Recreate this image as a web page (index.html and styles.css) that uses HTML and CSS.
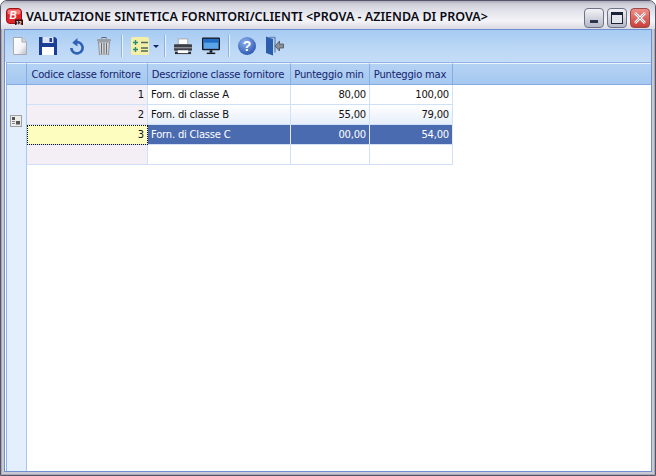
FILE: index.html
```html
<!DOCTYPE html>
<html lang="it">
<head>
<meta charset="utf-8">
<title>Valutazione sintetica</title>
<link rel="stylesheet" href="styles.css">
</head>
<body>
<div class="window">
  <div class="titlebar">
    <svg class="appicon" width="17" height="17" viewBox="0 0 17 17">
      <rect x="0.500" y="0.500" width="15" height="15" rx="3.500" fill="#e0242a" stroke="#a01018"/>
      <rect x="1.500" y="1.500" width="13" height="5" rx="2" fill="#f27a78"/>
      <text class="icon-b" x="3.500" y="10.500">B</text>
      <rect x="9" y="11.500" width="8" height="5.500" fill="#3a0a0a"/>
      <text class="icon-12" x="10" y="16.500">12</text>
    </svg>
    <span class="title">VALUTAZIONE SINTETICA FORNITORI/CLIENTI &lt;PROVA - AZIENDA DI PROVA&gt;</span>
    <div class="winbtns">
      <div class="wb wb-min"><span class="wb-minbar"></span></div>
      <div class="wb wb-max"><span class="wb-maxbox"></span></div>
      <div class="wb wb-close">
        <svg width="14" height="14" viewBox="0 0 14 14"><path d="M2 2l10 10M12 2L2 12" stroke="#fff" stroke-width="2.600"/><path d="M2 2l10 10M12 2L2 12" stroke="#5a1010" stroke-width="0.400"/></svg>
      </div>
    </div>
  </div>
  <div class="body">
    <div class="toolbar">
      <svg class="ti" width="14" height="18" viewBox="0 0 14 18"><defs><linearGradient id="pg" x1="0" y1="0" x2="1" y2="1"><stop offset="0" stop-color="#fff"/><stop offset="0.600" stop-color="#f4f4f8"/><stop offset="1" stop-color="#b9bcc4"/></linearGradient></defs><path d="M0.500 0.500h8.500l4.500 4.500v12.500H0.500z" fill="url(#pg)" stroke="#a8aab4"/><path d="M9 0.500v4.500h4.500" fill="#d8d8de" stroke="#a4a6b0"/></svg>
      <svg class="ti ti-save" width="18" height="18" viewBox="0 0 18 18"><path d="M0 0h16l2 2v16H0z" fill="#1b3f94"/><rect x="3.500" y="0" width="11" height="6" fill="#dce4f5"/><rect x="10.500" y="1" width="2.500" height="4" fill="#1b3f94"/><rect x="3" y="10" width="12" height="8" fill="#fff"/></svg>
      <svg class="ti ti-undo" width="15" height="17" viewBox="0 0 16 18"><path d="M5 5.500a6 6 0 1 1-2.500 5" fill="none" stroke="#2f62b4" stroke-width="2.800"/><path d="M9 0v9L3.500 5z" fill="#2f62b4"/></svg>
      <svg class="ti ti-trash" width="14" height="18" viewBox="0 0 14 18"><rect x="5" y="0.500" width="4" height="2" fill="none" stroke="#666"/><rect x="0" y="2" width="14" height="2.500" rx="1" fill="#9a9ea4"/><path d="M1.500 5h11l-1 13h-9z" fill="#d2d4d8" stroke="#777" stroke-width="0.700"/><path d="M4.500 6v11M7 6v11M9.500 6v11" stroke="#6e7076"/></svg>
      <span class="sep sep-a"></span>
      <span class="calc">
        <svg width="18" height="16" viewBox="0 0 18 16"><path d="M2 4.500h5M4.500 2v5M2 11.500h5M4.500 9v5" stroke="#2a8a78" stroke-width="1.400"/><path d="M10 4.500h7M10 10h7M10 13h7" stroke="#4f6a5a" stroke-width="1.400"/></svg>
      </span>
      <span class="caret"></span>
      <span class="sep sep-b"></span>
      <svg class="ti ti-print" width="18" height="17" viewBox="0 0 19 17"><rect x="4.500" y="0.500" width="10" height="6" fill="#fff" stroke="#aaa"/><rect x="0" y="6" width="19" height="7" rx="1" fill="#3c3f46"/><rect x="0" y="9" width="19" height="1.500" fill="#8a8d94"/><rect x="1" y="14" width="17" height="2.500" fill="#2a2c32"/><rect x="4" y="12.500" width="11" height="3" fill="#fff"/></svg>
      <svg class="ti ti-mon" width="18" height="18" viewBox="0 0 19 18"><rect x="0" y="0" width="19" height="13.500" rx="1" fill="#15181e"/><rect x="1.500" y="1.500" width="16" height="10.500" fill="#5aa4ea"/><rect x="1.500" y="1.500" width="16" height="4" fill="#1f6cc4"/><rect x="8" y="13.500" width="3" height="2.500" fill="#15181e"/><rect x="5" y="16" width="9" height="1.500" fill="#15181e"/></svg>
      <span class="sep sep-c"></span>
      <span class="help">?</span>
      <svg class="ti ti-exit" width="18" height="20" viewBox="0 0 18 20"><path d="M0 0.500l7 2.500v16.500l-7-2.500z" fill="#2c5cac"/><path d="M3 1.500h6v15" fill="none" stroke="#6e8ab8" stroke-width="1.400"/><path d="M17.500 8v4h-4v3l-4.500-5 4.500-5v3z" fill="#8a8f96" stroke="#44484e" stroke-width="0.700"/></svg>
    </div>
    <div class="gridwrap">
      <div class="grid">
        <div class="hd-corner"></div>
        <div class="hd">Codice classe fornitore</div>
        <div class="hd">Descrizione classe fornitore</div>
        <div class="hd">Punteggio min</div>
        <div class="hd">Punteggio max</div>
        <div class="hd-fill"></div>

        <div class="side">
          <svg class="recicon" width="12" height="12" viewBox="0 0 12 12"><rect x="0.500" y="0.500" width="11" height="11" fill="#ececec" stroke="#a0a0a0"/><rect x="2" y="2" width="3" height="3" fill="#555"/><rect x="6" y="6" width="4" height="3.500" fill="#555"/><path d="M2 6.500h3M2 8.500h3" stroke="#888"/></svg>
        </div>

        <div class="c key num">1</div>
        <div class="c">Forn. di classe A</div>
        <div class="c num">80,00</div>
        <div class="c num">100,00</div>
        <div class="rest r1"></div>

        <div class="c key num g">2</div>
        <div class="c g">Forn. di classe B</div>
        <div class="c num g">55,00</div>
        <div class="c num g">79,00</div>

        <div class="c key num cur">3</div>
        <div class="c sel">Forn. di Classe C</div>
        <div class="c num sel">00,00</div>
        <div class="c num sel">54,00</div>

        <div class="c key"></div>
        <div class="c"></div>
        <div class="c"></div>
        <div class="c"></div>
      </div>
    </div>
  </div>
</div>
</body>
</html>
```
FILE: styles.css
```css
* { box-sizing: border-box; }
html, body { margin: 0; padding: 0; }
body { width: 656px; height: 476px; overflow: hidden; background: #fff; font-family: "DejaVu Sans", sans-serif; }

.window {
  width: 656px; height: 476px;
  display: flex; flex-direction: column;
  background: #c9c9d3;
  border: 1px solid #55556a;
  border-radius: 7px 7px 0 0;
  padding: 0 3px 3px;
  box-shadow: inset 1px 0 0 #a8a8b8, inset -1px 0 0 #a8a8b8, inset 0 -1px 0 #a8a8b8;
  overflow: hidden;
}
.titlebar {
  flex: 0 0 28px;
  margin: 0 -3px;
  padding: 0 3px 0 5px;
  display: flex; align-items: center;
  background: linear-gradient(#a9a9b7 0, #cfcfd9 3px, #e2e2ea 10px, #f4f4f8 20px, #dcdce4 27px);
}
.appicon { flex: none; margin-top: 3px; }
.icon-b { font: italic bold 10px "Liberation Sans", sans-serif; fill: #fff; }
.icon-12 { font: bold 5px "Liberation Sans", sans-serif; fill: #fff; }
.title {
  margin-left: 3px; margin-top: 3px;
  font-family: "Noto Sans", sans-serif;
  font-size: 12.5px; font-weight: 600; color: #0a0a14;
  white-space: nowrap;
  flex: 1;
}
.winbtns { display: flex; gap: 3px; margin-top: 5px; padding-right: 2px; }
.wb {
  width: 20px; height: 20px; border-radius: 4px;
  border: 1px solid #6e7488;
  display: flex; align-items: center; justify-content: center;
  background: linear-gradient(#f2f2f6, #b6b8c8);
}
.wb-min { align-items: flex-end; padding-bottom: 4px; }
.wb-minbar { width: 8px; height: 3px; background: #2c3450; }
.wb-maxbox { width: 12px; height: 12px; border: 1px solid #1c2238; border-top-width: 3px; background: #e4e6ee; }
.wb-close { background: linear-gradient(#ee8f88, #c93f3c); border-color: #9a4a4a; }

.body {
  flex: 1; min-height: 0;
  display: flex; flex-direction: column;
  border: 1px solid #6f8fd0;
  background: #fff;
}
.toolbar {
  flex: 0 0 32px;
  display: flex; align-items: center;
  padding-left: 8px;
  background: linear-gradient(#a6cbf2, #bdd8f6 60%, #c4dcf6);
}
.ti { flex: none; display: block; }
.ti-save { margin-left: 12px; }
.ti-undo { margin-left: 12px; }
.ti-trash { margin-left: 13px; }
.sep { width: 1px; height: 22px; background: #eaf3fd; box-shadow: -1px 0 0 #8fb3e0; flex: none; }
.sep-a { margin-left: 11px; }
.calc {
  margin-left: 8px; width: 18px; height: 18px;
  background: #f3efa6; display: flex; align-items: center; justify-content: center;
  border-radius: 2px; flex: none;
}
.caret {
  margin-left: 4px; flex: none; width: 0; height: 0;
  border-left: 3px solid transparent; border-right: 3px solid transparent; border-top: 3px solid #14246e;
}
.sep-b { margin-left: 6px; }
.ti-print { margin-left: 8px; }
.ti-mon { margin-left: 10px; }
.sep-c { margin-left: 9px; }
.help {
  margin-left: 8px; width: 18px; height: 18px; border-radius: 50%; flex: none;
  background: radial-gradient(circle at 40% 30%, #8fb0ec, #2f5cb4 75%);
  color: #fff; font: bold 14px/18px "Liberation Sans", sans-serif; text-align: center;
}
.ti-exit { margin-left: 10px; }

.gridwrap {
  flex: 1; min-height: 0;
  display: flex;
  padding-left: 1px;
  background: #fff;
}
.grid {
  flex: 1;
  display: grid;
  grid-template-columns: 20px 121px 143px 79px 83px 1fr;
  grid-template-rows: 22px 20px 20px 20px 20px 1fr;
  font-size: 10px;
  letter-spacing: -0.21px;
  border-left: 1px solid #8fb3e6;
  border-top: 1px solid #8fb3e6;
}
.hd-corner, .hd, .hd-fill {
  background: linear-gradient(#b4d2f3, #a6c8f0);
  border-right: 1px solid #86ade2;
  border-bottom: 1px solid #86ade2;
  border-top: 1px solid #eaf3fd;
}
.hd-fill { border-right: 0; }
.hd {
  color: #14246e; display: flex; align-items: center; justify-content: center;
  white-space: nowrap; padding: 1px 2px 0 0;
}
.side {
  grid-column: 1; grid-row: 2 / 7;
  background: #e3effc;
  display: flex; flex-direction: column; align-items: center;
  padding-top: 30px; padding-right: 2px;
  border-right: 1px solid #a8c8f0;
}
.recicon { display: block; }
.c {
  display: flex; align-items: center; padding: 0 3px;
  border-right: 1px solid #cfe0f8; border-bottom: 1px solid #cfe0f8;
  color: #111; background: #fff; white-space: nowrap;
}
.num { justify-content: flex-end; }
.key { background: #f3eff5; }
.g { background: linear-gradient(#ffffff, #e6eefa); }
.key.g { background: #f3eff5; }
.cur { background: #fdfdc0; outline: 1px dotted #111; outline-offset: -1px; }
.sel { background: #4b6bb0; color: #fff; border-right-color: #e2eafa; }
.rest { grid-column: 6; grid-row: 2 / 7; background: #fff; }
```
